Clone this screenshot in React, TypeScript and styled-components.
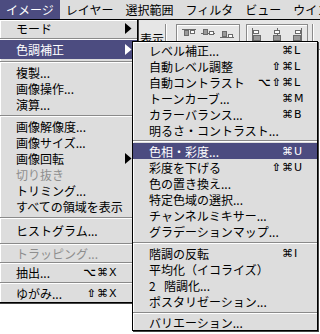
import React from "react";
import styled, { createGlobalStyle } from "styled-components";

const Global = createGlobalStyle`
  html, body { margin: 0; padding: 0; background: #fff; }
  body { width: 320px; height: 334px; overflow: hidden; }
  * { box-sizing: border-box; }
`;

const HL = "#4c4c80";
const MENU_BG = "#dddddd";

const Screen = styled.div`
  position: relative;
  width: 320px;
  height: 334px;
  overflow: hidden;
  background: #fff;
  font-family: "Noto Sans CJK JP", "Noto Sans", sans-serif;
  font-size: 12px;
  color: #000;
`;

const MenuBar = styled.div`
  display: flex;
  height: 20px;
  background: ${MENU_BG};
  border-bottom: 1px solid #000;
`;

const MenuTitle = styled.div<{ $active?: boolean }>`
  display: flex;
  align-items: center;
  height: 19px;
  padding: 0 6px;
  white-space: nowrap;
  background: ${(p) => (p.$active ? HL : "transparent")};
  color: ${(p) => (p.$active ? "#fff" : "#000")};
`;

const OptionsBar = styled.div`
  display: flex;
  align-items: flex-start;
  height: 30px;
  padding: 4px 0 0 140px;
  background: #e6e6e6;
  border-bottom: 1px solid #999;
`;

const OptLabel = styled.span`
  width: 24px;
  margin-top: 6px;
  white-space: nowrap;
`;

const VDivider = styled.div<{ $gap: number }>`
  width: 2px;
  height: 24px;
  margin-left: ${(p) => p.$gap}px;
  border-left: 1px solid #8a8a8a;
  border-right: 1px solid #fff;
`;

const ButtonGroup = styled.div<{ $gap: number; $w: number }>`
  display: flex;
  justify-content: space-around;
  align-items: center;
  width: ${(p) => p.$w}px;
  height: 22px;
  margin-left: ${(p) => p.$gap}px;
  border: 1px solid #8a8a8a;
  box-shadow: inset 1px 1px 0 #fff;
  padding: 0 2px;
`;

const Panel = styled.div<{ $left: number; $top: number; $width: number }>`
  position: absolute;
  left: ${(p) => p.$left}px;
  top: ${(p) => p.$top}px;
  width: ${(p) => p.$width}px;
  display: flex;
  flex-direction: column;
  background: ${MENU_BG};
  border: 1px solid #000;
  box-shadow: inset 1px 1px 0 #fff, 1px 1px 0 #444;
`;

const Item = styled.div<{ $h?: number; $hl?: boolean; $off?: boolean; $pr: number }>`
  display: flex;
  align-items: center;
  height: ${(p) => p.$h ?? 16}px;
  padding: 0 ${(p) => p.$pr}px 0 16px;
  white-space: nowrap;
  background: ${(p) => (p.$hl ? HL : "transparent")};
  color: ${(p) => (p.$hl ? "#fff" : p.$off ? "#8e8e8e" : "#000")};
`;

const Label = styled.span`
  flex: 1;
`;

const Lead = styled.span`
  display: inline-block;
  width: 15px;
`;

const Keys = styled.span<{ $trail?: number }>`
  display: flex;
  align-items: center;
  margin-right: ${(p) => p.$trail ?? 0}px;
  font-family: "DejaVu Sans", sans-serif;
  font-size: 11px;
`;

const Mods = styled.span`
  font-weight: bold;
  letter-spacing: 1px;
`;

const Cmd = styled.span`
  width: 11px;
  text-align: center;
`;

const Key = styled.span`
  width: 10px;
  padding-left: 1px;
`;

const Sep = styled.div<{ $h: number }>`
  display: flex;
  align-items: center;
  height: ${(p) => p.$h}px;
  &::before {
    content: "";
    flex: 1;
    height: 1px;
    background: #8a8a8a;
    box-shadow: 0 1px 0 #fff;
  }
`;

const Arrow = ({ white }: { white?: boolean }) => (
  <svg width="7" height="11" viewBox="0 0 7 11">
    <polygon points="0,0 6.5,5.5 0,11" fill={white ? "#fff" : "#000"} />
  </svg>
);

const AlignIcon = ({ kind }: { kind: number }) => {
  const s = "#6a6a6a";
  if (kind < 3) {
    const y = kind === 0 ? 2 : kind === 1 ? 6 : 10;
    return (
      <svg width="16" height="16" viewBox="0 0 16 16">
        <line x1="1" y1={y + 0.5} x2="15" y2={y + 0.5} stroke={s} />
        <rect x="3.5" y={kind === 0 ? 3.5 : kind === 1 ? 2.5 : 4.5} width="4" height="5" fill="#999" stroke={s} />
        <rect x="9.5" y={kind === 0 ? 3.5 : kind === 1 ? 4.5 : 7.5} width="4" height="3" fill="#fff" stroke={s} />
      </svg>
    );
  }
  const x = kind === 3 ? 2 : kind === 4 ? 8 : 13;
  return (
    <svg width="16" height="16" viewBox="0 0 16 16">
      <line x1={x + 0.5} y1="1" x2={x + 0.5} y2="15" stroke={s} />
      <rect x={kind === 3 ? 3.5 : kind === 4 ? 5.5 : 7.5} y="3.5" width="5" height="3" fill="#fff" stroke={s} />
      <rect x={kind === 3 ? 3.5 : kind === 4 ? 4.5 : 5.5} y="8.5" width="7" height="5" fill="#999" stroke={s} />
    </svg>
  );
};

type Row =
  | { sep: number }
  | {
      label: string;
      lead?: string;
      h?: number;
      hl?: boolean;
      off?: boolean;
      mods?: string;
      key?: string;
      arrow?: boolean;
    };

const mainRows: Row[] = [
  { label: "モード", arrow: true },
  { sep: 4 },
  { label: "色調補正", h: 19, hl: true, arrow: true },
  { sep: 5 },
  { label: "複製..." },
  { label: "画像操作..." },
  { label: "演算..." },
  { sep: 6 },
  { label: "画像解像度..." },
  { label: "画像サイズ..." },
  { label: "画像回転", arrow: true },
  { label: "切り抜き", off: true },
  { label: "トリミング..." },
  { label: "すべての領域を表示" },
  { sep: 6 },
  { label: "ヒストグラム...", h: 21 },
  { sep: 5 },
  { label: "トラッピング...", h: 14, off: true },
  { sep: 4 },
  { label: "抽出...", mods: "⌥", key: "X" },
  { sep: 4 },
  { label: "ゆがみ...", h: 18, mods: "⇧", key: "X" },
];

const subRows: Row[] = [
  { label: "レベル補正...", mods: "", key: "L" },
  { label: "自動レベル調整", mods: "⇧", key: "L" },
  { label: "自動コントラスト", mods: "⌥⇧", key: "L" },
  { label: "トーンカーブ...", mods: "", key: "M" },
  { label: "カラーバランス...", mods: "", key: "B" },
  { label: "明るさ・コントラスト..." },
  { sep: 5 },
  { label: "色相・彩度...", hl: true, mods: "", key: "U" },
  { label: "彩度を下げる", mods: "⇧", key: "U" },
  { label: "色の置き換え..." },
  { label: "特定色域の選択..." },
  { label: "チャンネルミキサー..." },
  { label: "グラデーションマップ..." },
  { sep: 6 },
  { label: "階調の反転", mods: "", key: "I" },
  { label: "平均化（イコライズ）" },
  { lead: "2", label: "階調化..." },
  { label: "ポスタリゼーション..." },
  { sep: 6 },
  { label: "バリエーション...", h: 15 },
];

const MenuRows = ({ rows, pr, trail }: { rows: Row[]; pr: number; trail: number }) => (
  <>
    {rows.map((r, i) =>
      "sep" in r ? (
        <Sep key={i} $h={r.sep} />
      ) : (
        <Item key={i} $h={r.h} $hl={r.hl} $off={r.off} $pr={pr}>
          <Label>
            {r.lead && <Lead>{r.lead}</Lead>}
            {r.label}
          </Label>
          {r.key && (
            <Keys $trail={trail}>
              <Mods>{r.mods}</Mods>
              <Cmd>⌘</Cmd>
              <Key>{r.key}</Key>
            </Keys>
          )}
          {r.arrow && <Arrow white={r.hl} />}
        </Item>
      )
    )}
  </>
);

export default function App() {
  return (
    <Screen>
      <Global />
      <MenuBar>
        <MenuTitle $active>イメージ</MenuTitle>
        <MenuTitle>レイヤー</MenuTitle>
        <MenuTitle>選択範囲</MenuTitle>
        <MenuTitle>フィルタ</MenuTitle>
        <MenuTitle>ビュー</MenuTitle>
        <MenuTitle>ウインドウ</MenuTitle>
      </MenuBar>
      <OptionsBar>
        <OptLabel>表示</OptLabel>
        <VDivider $gap={1} />
        <ButtonGroup $gap={9} $w={64}>
          <AlignIcon kind={0} />
          <AlignIcon kind={1} />
          <AlignIcon kind={2} />
        </ButtonGroup>
        <ButtonGroup $gap={6} $w={62}>
          <AlignIcon kind={3} />
          <AlignIcon kind={4} />
          <AlignIcon kind={5} />
        </ButtonGroup>
        <VDivider $gap={4} />
      </OptionsBar>
      <Panel $left={-1} $top={19} $width={139}>
        <MenuRows rows={mainRows} pr={5} trail={14} />
      </Panel>
      <Panel $left={132} $top={41} $width={186}>
        <MenuRows rows={subRows} pr={14} trail={0} />
      </Panel>
    </Screen>
  );
}
